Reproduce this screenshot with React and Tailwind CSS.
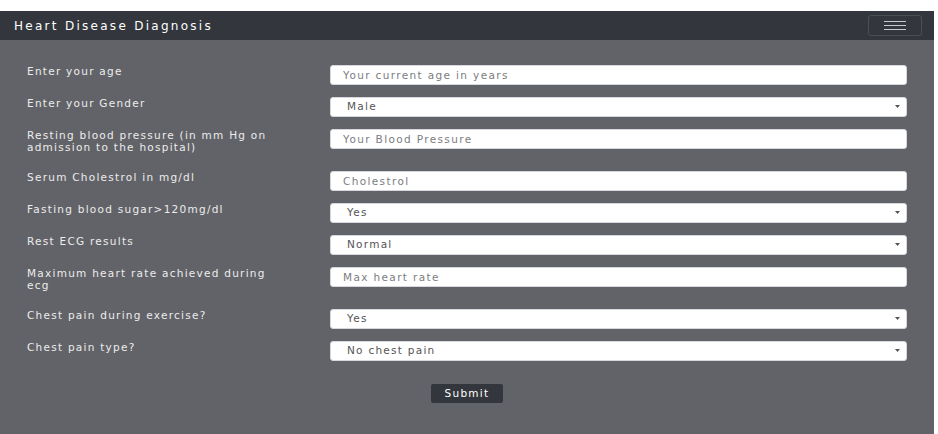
import { useState } from 'react'

const FIELDS = [
  { label: 'Enter your age', type: 'input', placeholder: 'Your current age in years' },
  { label: 'Enter your Gender', type: 'select', options: ['Male', 'Female'] },
  { label: 'Resting blood pressure (in mm Hg on admission to the hospital)', type: 'input', placeholder: 'Your Blood Pressure' },
  { label: 'Serum Cholestrol in mg/dl', type: 'input', placeholder: 'Cholestrol' },
  { label: 'Fasting blood sugar>120mg/dl', type: 'select', options: ['Yes', 'No'] },
  { label: 'Rest ECG results', type: 'select', options: ['Normal', 'Abnormal'] },
  { label: 'Maximum heart rate achieved during ecg', type: 'input', placeholder: 'Max heart rate' },
  { label: 'Chest pain during exercise?', type: 'select', options: ['Yes', 'No'] },
  { label: 'Chest pain type?', type: 'select', options: ['No chest pain', 'Typical angina', 'Atypical angina', 'Non-anginal pain'] },
]

function Field({ field }) {
  const [value, setValue] = useState(field.options ? field.options[0] : '')

  return (
    <div className="flex items-start mb-[12px]">
      <label className="w-[303px] pr-[44px] pt-[1px] pb-[6px] text-[10.5px] leading-[11.5px] tracking-[0.12em] text-[#ececec]">
        {field.label}
      </label>
      {field.type === 'input' ? (
        <input
          type="text"
          placeholder={field.placeholder}
          value={value}
          onChange={(e) => setValue(e.target.value)}
          className="block flex-1 h-[20px] rounded-[3px] border border-[#d6d8db] bg-white px-[12px] text-[10.5px] tracking-[0.13em] text-[#495057] placeholder:text-[#7b7d80] outline-none"
        />
      ) : (
        <div className="relative flex-1 h-[20px]">
          <select
            value={value}
            onChange={(e) => setValue(e.target.value)}
            className="block w-full h-[20px] appearance-none rounded-[3px] border border-[#d6d8db] bg-white pl-[16px] pr-[20px] text-[10.5px] tracking-[0.12em] text-[#555] outline-none"
          >
            {field.options.map((o) => (
              <option key={o}>{o}</option>
            ))}
          </select>
          <svg className="pointer-events-none absolute right-[7px] top-[8px]" width="5" height="3" viewBox="0 0 5 3">
            <path d="M0 0h5L2.5 3z" fill="#555" />
          </svg>
        </div>
      )}
    </div>
  )
}

export default function App() {
  return (
    <div className="flex h-[434px] flex-col bg-white pt-[11px] pr-[4px] font-['DejaVu_Sans',sans-serif]">
      <nav className="flex h-[29px] shrink-0 items-center justify-between bg-[#33373d] pl-[14px] pr-[12px]">
        <span className="text-[12px] tracking-[0.19em] text-white">Heart Disease Diagnosis</span>
        <button className="flex h-[21px] w-[54px] flex-col items-center justify-center gap-[3px] rounded-[3px] border border-[#4b5057]">
          <span className="block h-[1px] w-[22px] bg-[#c8c9cb]" />
          <span className="block h-[1px] w-[22px] bg-[#c8c9cb]" />
          <span className="block h-[1px] w-[22px] bg-[#c8c9cb]" />
        </button>
      </nav>

      <main className="flex-1 bg-[#626368] px-[27px] pt-[25px]">
        <form onSubmit={(e) => e.preventDefault()}>
          {FIELDS.map((f) => (
            <Field key={f.label} field={f} />
          ))}
          <div className="flex justify-center pt-[11px]">
            <button
              type="submit"
              className="h-[19px] w-[72px] rounded-[2px] bg-[#33373d] text-[10.5px] tracking-[0.12em] text-white"
            >
              Submit
            </button>
          </div>
        </form>
      </main>
    </div>
  )
}
